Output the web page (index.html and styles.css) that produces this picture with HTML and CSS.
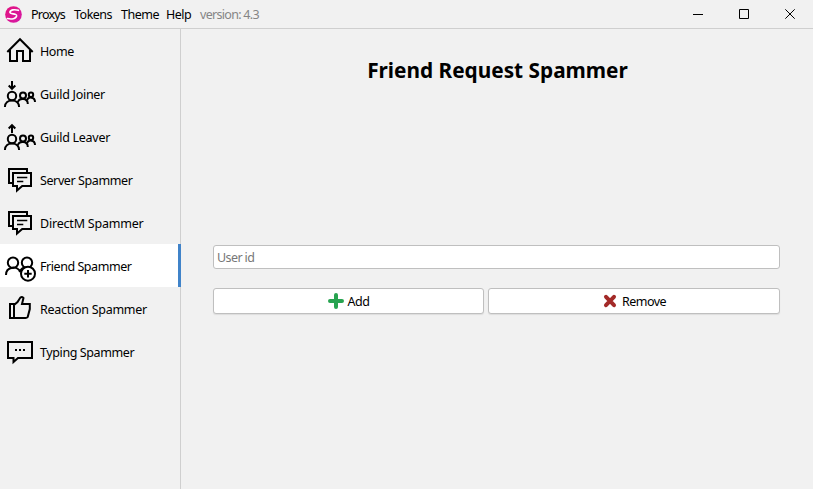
FILE: index.html
```
<!DOCTYPE html>
<html lang="en">
<head>
<meta charset="utf-8">
<title>Friend Request Spammer</title>
<link rel="stylesheet" href="styles.css">
</head>
<body>
<div class="window">
  <header class="titlebar">
    <svg class="logo" viewBox="0 0 18 18"><defs><linearGradient id="pink" x2="1" y2="1"><stop stop-color="#e3127e"/><stop offset="1" stop-color="#d51aa8"/></linearGradient></defs><circle cx="9" cy="9" r="8.8" fill="url(#pink)"/><path d="M14.200 4.600C10 3.200 5.400 4 5.200 6.700C5.200 9.300 12.700 7.300 12.300 10.500C11.700 13.700 7 14.200 2.500 13.300" fill="none" stroke="#fff" stroke-width="1.700" stroke-linecap="round"/></svg>
    <nav class="menu"><span class="m-proxys">Proxys</span><span class="m-tokens">Tokens</span><span class="m-theme">Theme</span><span class="m-help">Help</span><span class="version">version: 4.3</span></nav>
    <div class="controls">
      <svg viewBox="0 0 46 28"><path d="M18 14.500H28"/></svg>
      <svg viewBox="0 0 46 28"><path d="M18.500 9.500H27.500V18.500H18.500Z"/></svg>
      <svg viewBox="0 0 46 28"><path d="M18.300 9.300L27.700 18.700M27.700 9.300L18.300 18.700"/></svg>
    </div>
  </header>
  <div class="body">
    <aside class="sidebar">
      <div class="item"><svg viewBox="0 0 40 43"><path d="M7.300 23L20 10.200L32.700 23M10 21V32H17V22H23V32H30V21"/></svg><span class="t-home">Home</span></div>
      <div class="item"><svg viewBox="0 0 40 43"><path d="M12 9V16.500M8.700 13.500L12 16.800L15.300 13.500"/><use href="#people"/></svg><span class="t-join">Guild Joiner</span></div>
      <div class="item"><svg viewBox="0 0 40 43"><path d="M12 18V10.300M8.700 13.500L12 10.200L15.300 13.500"/><g id="people"><circle cx="12" cy="24" r="4.200"/><path d="M4.900 35C4.900 26.200 19.100 26.200 19.100 35"/><circle cx="23" cy="23.500" r="3"/><path d="M17.800 30.500C18.800 25.700 27.800 25.700 27.800 32"/><circle cx="31" cy="22.800" r="2.200"/><path d="M27 28.500C28 24.300 35 24.600 35 30"/></g></svg><span class="t-leave">Guild Leaver</span></div>
      <div class="item"><svg viewBox="0 0 40 43"><g id="chats"><path d="M12.500 25H9V11H27V14.500M13 15H31V28H22.200L17 32.500V28H13Z"/><path class="thin" d="M17 19.500H27.300M17 23.500H23.300"/></g></svg><span class="t-server">Server Spammer</span></div>
      <div class="item"><svg viewBox="0 0 40 43"><use href="#chats"/></svg><span class="t-direct">DirectM Spammer</span></div>
      <div class="item active"><svg viewBox="0 0 40 43"><circle cx="13" cy="18.700" r="5.200"/><circle cx="27" cy="18.700" r="5.200"/><path d="M6 31C6 22 18 21.500 20 28C20.500 25.500 22 24.500 24 23.800"/><circle cx="28" cy="29.700" r="7" fill="#fff"/><path d="M28 26V33.400M24.300 29.700H31.700"/></svg><span class="t-friend">Friend Spammer</span></div>
      <div class="item"><svg viewBox="0 0 40 43"><path d="M10 17H14V31H10ZM14 18L17.500 15L20.200 10.800Q22.200 9 23.500 11L22 17H29.800L29.800 22L27.700 30Q27 31 25.500 31H14"/></svg><span class="t-react">Reaction Spammer</span></div>
      <div class="item"><svg viewBox="0 0 40 43"><path d="M8 12H32V28H18L13.500 32V28H8Z"/><path d="M15 20H17M19 20H21M23 20H25"/></svg><span class="t-typing">Typing Spammer</span></div>
    </aside>
    <main class="content">
      <h1>Friend Request Spammer</h1>
      <input class="field" type="text" placeholder="User id">
      <div class="actions">
        <button class="add"><svg viewBox="0 0 16 16"><path d="M8 2V14M2 8H14" stroke="#27a350" stroke-width="4"/></svg><span>Add</span></button>
        <button class="remove"><svg viewBox="0 0 16 16"><path d="M4 3.800L12 12.200M12 3.800L4 12.200" stroke="#a32a28" stroke-width="4"/></svg><span>Remove</span></button>
      </div>
    </main>
  </div>
</div>
</body>
</html>
```
FILE: styles.css
```
* { box-sizing: border-box; }
body { margin: 0; background: #f1f1f1; color: #000; font: 12.5px/17px "Noto Sans", "Open Sans", sans-serif; }
.window { width: 813px; height: 489px; display: flex; flex-direction: column; overflow: hidden; }
.titlebar { height: 29px; border-bottom: 1px solid #cfcfcf; display: flex; align-items: center; padding-left: 5px; flex: none; }
.logo { width: 17px; height: 17px; margin-right: 9px; }
.menu { display: flex; white-space: nowrap; padding-top: 1px; }
.menu span { letter-spacing: -0.5px; }
.menu .m-proxys { width: 43px; letter-spacing: -0.8px; }
.menu .m-tokens { width: 47px; }
.menu .m-theme { width: 45px; }
.menu .m-help { width: 34px; }
.menu .version { color: #858585; letter-spacing: -0.7px; }
.controls { display: flex; margin-left: auto; }
.controls svg { width: 46px; height: 28px; fill: none; stroke: #000; stroke-width: 1; }
.body { display: flex; flex: 1; }
.sidebar { width: 181px; border-right: 1px solid #cfcfcf; flex: none; }
.item { height: 43px; display: flex; align-items: center; white-space: nowrap; }
.item span { padding-top: 2px; letter-spacing: -0.4px; }
.item .t-home, .item .t-friend { letter-spacing: -0.45px; }
.item .t-join, .item .t-leave { letter-spacing: -0.28px; }
.item .t-direct { letter-spacing: -0.2px; }
.item .t-react { letter-spacing: -0.27px; }
.item svg { width: 40px; height: 43px; fill: none; stroke: #000; stroke-width: 2; flex: none; }
.item .thin { stroke-width: 1.5; }
.active { background: #fff; width: 181px; border-right: 3px solid #4083c9; }
.content { flex: 1; padding: 26px 33px 0 32px; }
h1 { margin: 0 0 160px; height: 30px; font-size: 22px; line-height: 28px; text-align: center; transform: translateX(1px) scaleX(.945); }
.field { display: block; width: 100%; height: 24px; border: 1px solid #bfbfbf; border-radius: 3px; background: #fff; padding: 1px 3px 0; font: inherit; letter-spacing: -0.6px; outline: 0; }
.field::placeholder { color: #777; opacity: 1; }
.actions { display: grid; grid-template-columns: 271px 292px; gap: 4px; margin-top: 19px; }
.actions button { height: 26px; background: #fff; border: 1px solid #bfbfbf; border-radius: 3px; box-shadow: 0 1px 1px #ddd; font: inherit; color: #000; padding: 0; display: flex; align-items: center; justify-content: center; gap: 4px; letter-spacing: -0.5px; }
.actions svg { width: 16px; height: 16px; stroke-linecap: round; }
.actions span { padding-top: 1px; }
```
